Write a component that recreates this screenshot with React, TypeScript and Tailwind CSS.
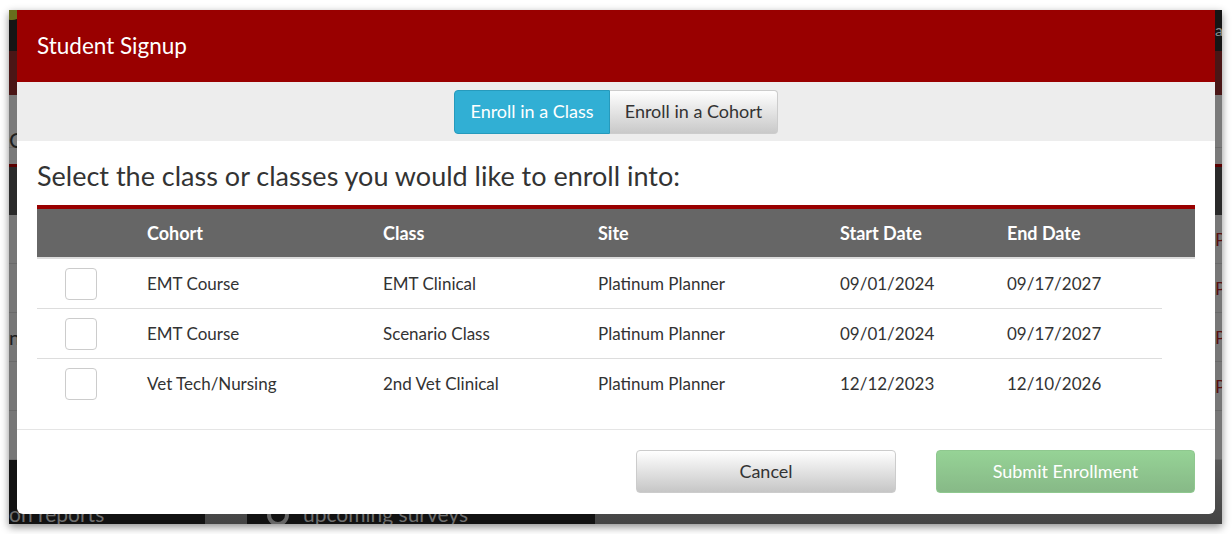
export default function App() {
  const rows = [
    ["EMT Course", "EMT Clinical", "Platinum Planner", "09/01/2024", "09/17/2027"],
    ["EMT Course", "Scenario Class", "Platinum Planner", "09/01/2024", "09/17/2027"],
    ["Vet Tech/Nursing", "2nd Vet Clinical", "Platinum Planner", "12/12/2023", "12/10/2026"],
  ];
  const heads = ["", "Cohort", "Class", "Site", "Start Date", "End Date"];
  return (
    <div className="w-[1232px] h-[534px] bg-white overflow-hidden font-['Lato',sans-serif]">
      <div className="pt-[10px] pl-[9px]">
        <div className="relative w-[1213px] h-[514px] shadow-[0_3px_8px_rgba(0,0,0,0.45)] overflow-hidden flex flex-col">
          {/* dimmed background page */}
          <div className="relative h-[42px] bg-[#151515] flex justify-end items-center">
            <div className="absolute left-[-10px] top-[-16px] w-[26px] h-[26px] rounded-full bg-[#676d1d]" />
            <span className="w-[7px] overflow-hidden text-[16px] text-[#8a8a8a] leading-none">a</span>
          </div>
          <div className="h-[45px] bg-[#4a1616]" />
          <div className="h-[71px] bg-[#7a7a7a] flex flex-col">
            <div className="h-[53px] border-b border-[#6c6c6c] flex items-end">
              <span className="text-[22px] text-[#1e1e1e] leading-none mb-[-4px]">C</span>
            </div>
          </div>
          <div className="h-[4px] bg-[#5a0000]" />
          <div className="h-[49px] bg-[#2a2a2a]" />
          <div className="flex-1 bg-[#777] flex flex-col">
            {[0, 1, 2, 3, 4].map((i) => (
              <div key={i} className="h-[49px] border-b border-[#6a6a6a] flex items-center justify-between">
                <span className="text-[20px] text-[#1e1e1e] leading-none">{i === 2 ? "nt" : ""}</span>
                <span className="w-[7px] overflow-hidden text-[18px] text-[#5a1212] leading-none">{i < 4 ? "P" : ""}</span>
              </div>
            ))}
          </div>
          <div className="h-[64px] bg-[#121212] flex">
            <div className="w-[196px] pt-[42px] text-[21px] leading-[24px] text-[#6e6e6e] whitespace-nowrap overflow-hidden">on reports</div>
            <div className="w-[42px] bg-gradient-to-b from-[#5a5a5a] to-[#444]" />
            <div className="w-[348px] pt-[42px] pl-[20px] flex gap-[14px] text-[21px] leading-[24px] text-[#6e6e6e] whitespace-nowrap">
              <span className="w-[22px] h-[22px] rounded-full border-[4px] border-[#666] mt-[2px]" />
              <span>upcoming surveys</span>
            </div>
            <div className="flex-1 bg-gradient-to-b from-[#5a5a5a] to-[#444]" />
          </div>

          {/* modal */}
          <div className="absolute left-[8px] top-0 w-[1198px] h-[504px] bg-white rounded-b-[6px] flex flex-col overflow-hidden">
            <div className="h-[72px] bg-[#990000] flex items-center px-[20px] text-white text-[22.5px]">Student Signup</div>
            <div className="h-[59px] bg-[#ededed] flex justify-center items-center">
              <div className="flex h-[44px]">
                <button className="w-[156px] h-full bg-[#31afd4] border border-[#269abc] rounded-l-[4px] text-white text-[18px]">Enroll in a Class</button>
                <button className="w-[168px] h-full bg-gradient-to-b from-white to-[#c9c9c9] border border-l-0 border-[#cccccc] rounded-r-[4px] text-[#333] text-[18px]">Enroll in a Cohort</button>
              </div>
            </div>
            <div className="px-[20px] pt-[17px] flex flex-col">
              <div className="text-[27px] leading-[36px] text-[#333] mb-[11px]">Select the class or classes you would like to enroll into:</div>
              <div className="w-[1158px] h-[54px] border-t-[4px] border-[#990000] bg-[#666] border-b-2 border-b-[#dddddd] grid grid-cols-[100px_236px_215px_242px_167px_1fr] items-center text-white font-bold text-[18px]">
                {heads.map((h, i) => (
                  <div key={i} className="pl-[10px]">{h}</div>
                ))}
              </div>
              <div className="w-[1125px] flex flex-col">
                {rows.map((r, ri) => (
                  <div key={ri} className={"h-[50px] grid grid-cols-[100px_236px_215px_242px_167px_1fr] items-center text-[17px] text-[#333] " + (ri < 2 ? "border-b border-[#dddddd]" : "")}>
                    <div className="pl-[28px]">
                      <div className="w-[32px] h-[32px] rounded-[4px] border border-[#cccccc] bg-white" />
                    </div>
                    {r.map((c, ci) => (
                      <div key={ci} className="pl-[10px]">{c}</div>
                    ))}
                  </div>
                ))}
              </div>
              <div className="h-[20px]" />
            </div>
            <div className="flex-1 border-t border-[#e5e5e5] flex justify-end gap-[40px] px-[20px] pt-[20px]">
              <button className="w-[260px] h-[43px] rounded-[4px] border border-[#cccccc] bg-gradient-to-b from-white to-[#c6c6c6] text-[#333] text-[18px]">Cancel</button>
              <button className="w-[259px] h-[43px] rounded-[4px] border border-[#8fc88f] bg-gradient-to-b from-[#96d396] to-[#87b987] text-white text-[18px]">Submit Enrollment</button>
            </div>
          </div>
        </div>
      </div>
    </div>
  );
}
